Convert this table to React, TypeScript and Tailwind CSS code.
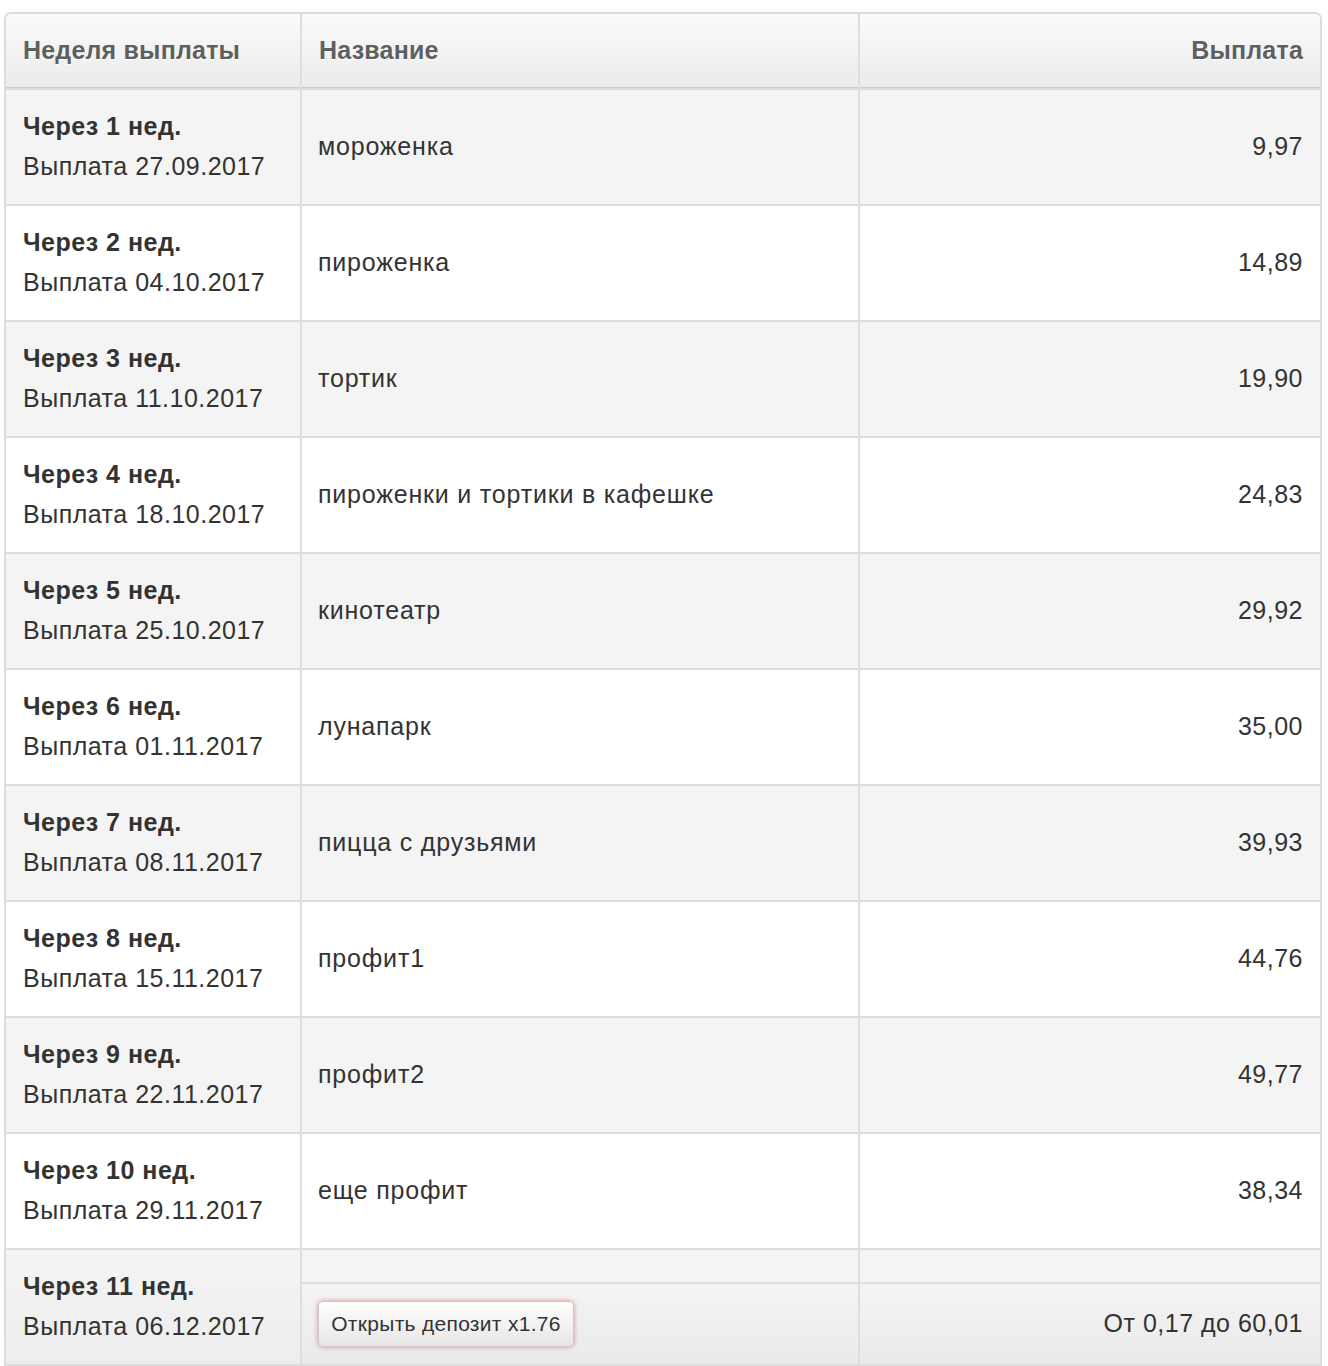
const rows = [
  { week: 1, date: "27.09.2017", name: "мороженка", pay: "9,97" },
  { week: 2, date: "04.10.2017", name: "пироженка", pay: "14,89" },
  { week: 3, date: "11.10.2017", name: "тортик", pay: "19,90" },
  { week: 4, date: "18.10.2017", name: "пироженки и тортики в кафешке", pay: "24,83" },
  { week: 5, date: "25.10.2017", name: "кинотеатр", pay: "29,92" },
  { week: 6, date: "01.11.2017", name: "лунапарк", pay: "35,00" },
  { week: 7, date: "08.11.2017", name: "пицца с друзьями", pay: "39,93" },
  { week: 8, date: "15.11.2017", name: "профит1", pay: "44,76" },
  { week: 9, date: "22.11.2017", name: "профит2", pay: "49,77" },
  { week: 10, date: "29.11.2017", name: "еще профит", pay: "38,34" },
];

export default function App() {
  return (
    <div className="min-h-[1366px] bg-white pt-[12px] pl-[4px] font-['Liberation_Sans',Arial,sans-serif] text-[25px] leading-[40px] tracking-[0.5px] text-[#333]">
      <div className="w-[1318px] overflow-hidden rounded-t-[7px] border-2 border-[#dcdcdc]">
        <div className="grid grid-cols-[294px_556px_460px] gap-[2px] bg-[#dedede]">
          {/* header */}
          {["Неделя выплаты", "Название", "Выплата"].map((h, i) => (
            <div
              key={h}
              className={`flex h-[74px] items-center border-b-[1px] border-[#cdcdcd] bg-gradient-to-b from-[#fbfbfb] to-[#ebebeb] px-[17px] pb-[2px] font-bold tracking-[0.2px] text-[#5f5f5f] [text-shadow:0_1px_0_#fff] ${
                i === 2 ? "justify-end" : ""
              }`}
            >
              {h}
            </div>
          ))}

          {rows.map((r, idx) => {
            const bg = idx % 2 === 0 ? "bg-[#f4f4f4]" : "bg-white";
            return (
              <div key={r.week} className="contents">
                <div className={`flex h-[114px] flex-col justify-center px-[17px] pb-[2px] ${bg}`}>
                  <div className="font-bold">Через {r.week} нед.</div>
                  <div>Выплата {r.date}</div>
                </div>
                <div className={`flex h-[114px] items-center px-[16px] pb-[2px] tracking-[0.8px] ${bg}`}>{r.name}</div>
                <div className={`flex h-[114px] items-center justify-end px-[17px] pb-[2px] ${bg}`}>{r.pay}</div>
              </div>
            );
          })}

          {/* last row */}
          <div className="row-span-2 flex h-[114px] flex-col justify-center bg-gradient-to-b from-[#f4f4f4] to-[#ededed] px-[17px] pb-[2px]">
            <div className="font-bold">Через 11 нед.</div>
            <div>Выплата 06.12.2017</div>
          </div>
          <div className="h-[32px] bg-[#f4f4f4]" />
          <div className="h-[32px] bg-[#f4f4f4]" />
          <div className="flex h-[80px] items-center bg-gradient-to-b from-[#f4f4f4] to-[#eaeaea] px-[16px]">
            <button className="h-[46px] w-[256px] rounded-[5px] border border-[#c9c9c9] bg-gradient-to-b from-white to-[#e6e6e6] text-[21px] leading-[24px] tracking-[0.3px] text-[#333] shadow-[0_0_5px_rgba(220,60,60,0.55)]">
              Открыть депозит x1.76
            </button>
          </div>
          <div className="flex h-[80px] items-center justify-end bg-gradient-to-b from-[#f4f4f4] to-[#eaeaea] px-[17px] pb-[2px]">
            От 0,17 до 60,01
          </div>
        </div>
      </div>
    </div>
  );
}
